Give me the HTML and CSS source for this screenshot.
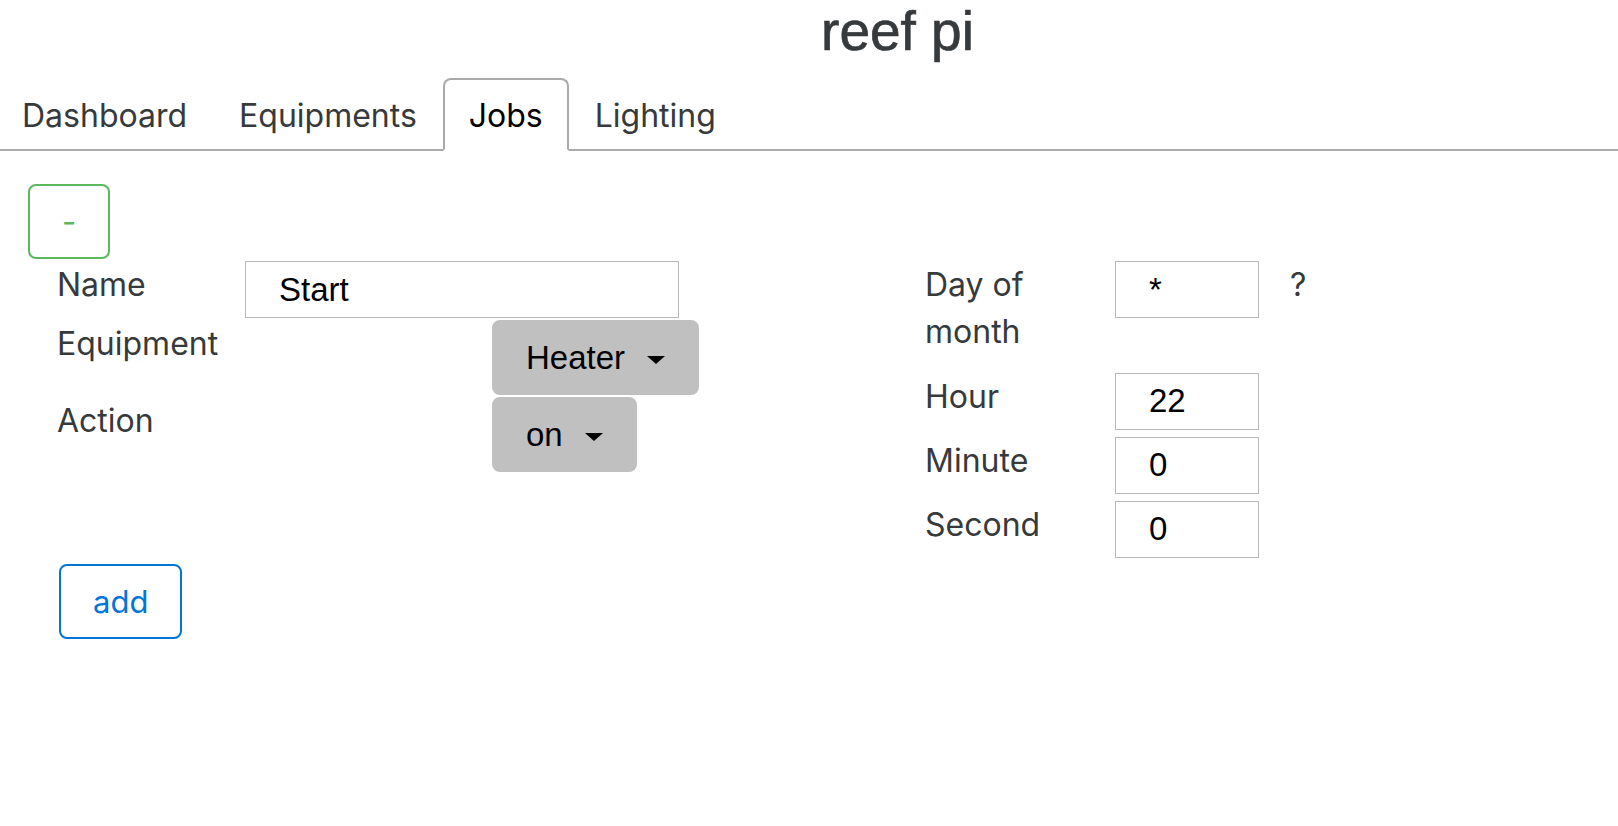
FILE: index.html
```html
<!DOCTYPE html>
<html lang="en">
<head>
<meta charset="utf-8">
<title>reef pi</title>
<link rel="stylesheet" href="styles.css">
</head>
<body>
<header class="title-bar">
  <h1 class="title">reef pi</h1>
</header>
<nav class="tabs">
  <a class="tab">Dashboard</a>
  <a class="tab">Equipments</a>
  <a class="tab active">Jobs</a>
  <a class="tab">Lighting</a>
</nav>
<main class="content">
  <button class="btn btn-green">-</button>
  <div class="job">
    <div class="job-form">
      <div class="col lcol">
        <div class="row">
          <label class="lbl">Name</label>
          <input class="txt txt-wide" type="text" value="Start">
        </div>
        <div class="row">
          <label class="lbl">Equipment</label>
          <button class="dd">Heater</button>
        </div>
        <div class="row">
          <label class="lbl">Action</label>
          <button class="dd">on</button>
        </div>
      </div>
      <div class="col rcol">
        <div class="row row-day">
          <label class="lbl">Day of month</label>
          <input class="txt txt-narrow" type="text" value="*">
          <span class="hint">?</span>
        </div>
        <div class="row">
          <label class="lbl">Hour</label>
          <input class="txt txt-narrow" type="text" value="22">
        </div>
        <div class="row">
          <label class="lbl">Minute</label>
          <input class="txt txt-narrow" type="text" value="0">
        </div>
        <div class="row">
          <label class="lbl">Second</label>
          <input class="txt txt-narrow" type="text" value="0">
        </div>
      </div>
    </div>
    <button class="btn btn-blue">add</button>
  </div>
</main>
</body>
</html>
```
FILE: styles.css
```css
body {
  margin: 0;
  background: #fff;
  color: #373a3c;
  font-family: Inter, "Liberation Sans", sans-serif;
}

.title-bar {
  height: 62px;
  padding-left: 177px;
  text-align: center;
}

.title {
  margin: 0;
  font-family: "Liberation Sans", Arial, sans-serif;
  font-weight: 400;
  font-size: 55px;
  line-height: 62px;
  letter-spacing: 0;
  color: #373a3c;
  -webkit-text-stroke: 0.7px #373a3c;
}

.tabs {
  display: flex;
  margin-top: 16px;
  margin-left: -4px;
  border-bottom: 2px solid #aaa;
}

.tab {
  padding: 16px 24px 13px;
  font-size: 32px;
  line-height: 40px;
  color: #373a3c;
  border: 2px solid transparent;
  border-radius: 8px 8px 0 0;
  margin-bottom: -2px;
  cursor: pointer;
}

.tab.active {
  color: #000;
  background: #fff;
  border-color: #aaa #aaa #fff;
}

.content {
  padding: 33px 0 0 28px;
}

.btn {
  display: block;
  margin: 0;
  padding: 16px 32px;
  font-family: Inter, "Liberation Sans", sans-serif;
  font-size: 31px;
  line-height: 39px;
  background: #fff;
  border: 2px solid;
  border-radius: 8px;
}

.btn-green {
  color: #5cb85c;
  border-color: #5cb85c;
}

.btn-blue {
  color: #0275d8;
  border-color: #0275d8;
  margin: 6px 0 0 2px;
}

.job {
  padding-left: 29px;
  margin-top: 2px;
}

.job-form {
  display: grid;
  grid-template-columns: 868px 1fr;
  align-items: start;
}

.row {
  display: flex;
  align-items: flex-start;
}

.lcol .row + .row {
  margin-top: 2px;
}

.rcol .row + .row {
  margin-top: 7px;
}

.rcol .row-day {
  margin-bottom: 17.5px;
}

.lbl {
  flex: none;
  box-sizing: border-box;
  width: 188px;
  font-size: 32px;
  line-height: 47px;
  color: #373a3c;
}

.rcol .lbl {
  width: 190px;
  padding-right: 24px;
}

.txt {
  box-sizing: border-box;
  height: 57px;
  margin: 0;
  padding: 0 0 0 33px;
  border: 1px solid #b8b8b8;
  border-radius: 0;
  font-family: "Liberation Sans", Arial, sans-serif;
  font-size: 33px;
  color: #000;
  background: #fff;
  outline: none;
}

.txt-wide {
  width: 434px;
}

.txt-narrow {
  width: 144px;
}

.dd {
  margin: 0 0 0 247px;
  padding: 16px 32px;
  background: #c0c0c0;
  border: 2px solid #c0c0c0;
  border-radius: 8px;
  font-family: "Liberation Sans", Arial, sans-serif;
  font-size: 33px;
  line-height: 39px;
  color: #000;
}

.dd::after {
  content: "";
  display: inline-block;
  width: 0;
  height: 0;
  margin-left: 22px;
  vertical-align: middle;
  border-top: 8px solid #000;
  border-left: 9px solid transparent;
  border-right: 9px solid transparent;
}

.hint {
  margin-left: 31px;
  font-size: 32px;
  line-height: 47px;
  color: #373a3c;
}
```
